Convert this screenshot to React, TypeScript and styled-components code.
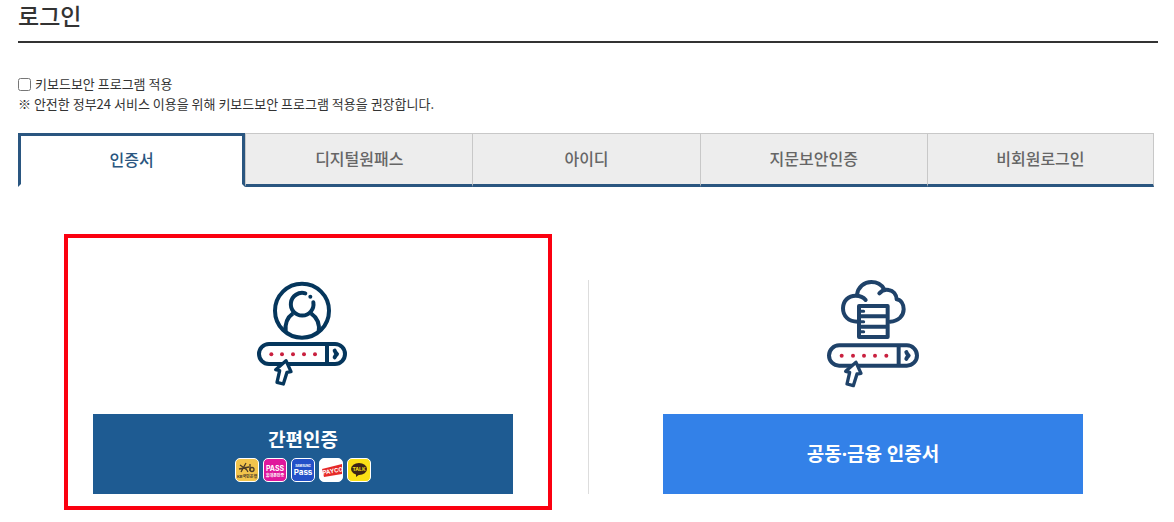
import React, { useState } from "react";
import styled, { createGlobalStyle, css } from "styled-components";

const NAVY = "#2a5680";

const GlobalStyle = createGlobalStyle`
  *, *::before, *::after { box-sizing: border-box; }
  body {
    margin: 0;
    background: #fff;
    color: #333;
    font-family: "Noto Sans CJK KR", "Noto Sans", sans-serif;
    font-size: 13px;
    line-height: 20px;
  }
  button { font-family: inherit; cursor: pointer; }
`;

const Page = styled.main`
  padding: 0 16px 28px 18px;
`;

const Title = styled.h1`
  margin: 0;
  padding-bottom: 10px;
  border-bottom: 2px solid #333;
  font-size: 23px;
  line-height: 31px;
  font-weight: 500;
`;

const Security = styled.div`
  padding: 31px 0 19px;
`;

const CheckLabel = styled.label`
  display: flex;
  align-items: center;
  gap: 4px;
`;

const Checkbox = styled.input`
  width: 13px;
  height: 13px;
  margin: 0;
`;

const Note = styled.p`
  margin: 0;
`;

const TabList = styled.div`
  display: grid;
  grid-template-columns: repeat(5, 1fr);
  padding-right: 4px;
`;

const Tab = styled.button<{ $active: boolean }>`
  height: 54px;
  padding: 0 0 2px;
  font-size: 16px;
  line-height: 24px;
  font-weight: 500;
  border: 0 solid #c8c8c8;
  border-bottom: 3px solid ${NAVY};
  border-top-width: 1px;
  border-left-width: 1px;
  background: #ededed;
  color: #666;

  &:last-child { border-right-width: 1px; }

  ${({ $active }) =>
    $active &&
    css`
      border: 3px solid ${NAVY};
      border-bottom-color: #fff;
      background: #fff;
      color: ${NAVY};
    `}
`;

const Methods = styled.section`
  display: grid;
  grid-template-columns: repeat(2, 1fr);
  padding-top: 93px;
`;

const Method = styled.div`
  display: flex;
  justify-content: center;

  & + & {
    box-shadow: inset 1px 0 0 #ddd;
  }
`;

const MethodBody = styled.div<{ $highlighted?: boolean }>`
  position: relative;
  display: flex;
  flex-direction: column;
  align-items: center;
  gap: 20px;
  width: 100%;
  max-width: 420px;

  ${({ $highlighted }) =>
    $highlighted &&
    css`
      &::after {
        content: "";
        position: absolute;
        inset: -46px -39px -16px -29px;
        border: 4px solid #fb0010;
        pointer-events: none;
      }
    `}
`;

const MethodButton = styled.button<{ $color: string }>`
  display: flex;
  flex-direction: column;
  align-items: center;
  justify-content: center;
  gap: 4px;
  width: 100%;
  height: 80px;
  padding: 0;
  border: 0;
  background: ${({ $color }) => $color};
  color: #fff;
  font-family: "Noto Sans", "Noto Sans CJK KR", sans-serif;
  font-size: 19px;
  line-height: 28px;
  font-weight: 700;
`;

const Providers = styled.span`
  display: flex;
  gap: 4px;
`;

const ProviderIcon = styled.svg<{ $color: string }>`
  display: block;
  width: 24px;
  height: 24px;
  border: 1px solid #fff;
  border-radius: 5px;
  background: ${({ $color }) => $color};
  font-family: "Inter", "Noto Sans CJK KR", sans-serif;
  font-weight: 700;
  text-anchor: middle;
`;

const Drawing = styled.svg`
  display: block;
  width: 120px;
  height: 114px;
  fill: none;
  stroke-linecap: round;
  stroke-linejoin: round;
`;

function PasswordBar({ end, divider, y, height, dots }: {
  end: number; divider: number; y: number; height: number; dots: number[];
}) {
  const mid = y + height / 2;
  const top = y + height - 10;
  return (
    <>
      <rect x="57" y={y} width={end - 57} height={height} rx={height / 2} />
      <path d={`M${divider} ${y}V${y + height}`} strokeLinecap="butt" />
      <path d={`M${divider + 23} ${mid - 10}q2 6 7 10q-5 5 -7 10`} />
      {dots.map((x) => (
        <circle key={x} cx={x} cy={mid + 1} r="6" fill="#c9203f" stroke="none" />
      ))}
      <path
        d={`M138 ${top}L107 ${top + 27}L119 ${top + 30}L111 ${top + 65}L130 ${top + 70}L141 ${top + 35}L153 ${top + 33}Z`}
        fill="#fff"
        strokeWidth="10"
      />
    </>
  );
}

function PersonDrawing() {
  return (
    <Drawing viewBox="9 30 360 342" stroke="#05365c" strokeWidth="12" aria-hidden="true">
      <circle cx="186" cy="122" r="81" />
      <path d="M196 70A34 34 0 1 0 220 97" />
      <circle cx="211" cy="80" r="6" fill="#05365c" stroke="none" />
      <path d="M159 130C143 141 134 160 137 186M213 130C229 141 240 160 236 186" strokeLinecap="butt" />
      <PasswordBar end={315} divider={261} y={222} height={60} dots={[94, 126, 159, 192, 225]} />
    </Drawing>
  );
}

function CloudDrawing() {
  return (
    <Drawing viewBox="9 30 360 342" stroke="#1f4269" strokeWidth="12" aria-hidden="true">
      <path d="M143 155C115 155 99 138 99 115C99 93 115 77 137 77C150 77 160 81 167 90" />
      <path d="M141 74C144 52 162 36 184 36C200 36 214 43 222 57" />
      <path d="M208 70C216 61 226 58 236 60C250 62 259 73 260 88C273 90 281 103 281 118C281 138 265 154 240 155" />
      <path d="M147 108H233V201H147ZM147 139H233M147 170H233" fill="#fff" />
      <path d="M150 124H161M150 155H161M150 185H161" strokeWidth="9" />
      <PasswordBar end={321} divider={266} y={226} height={61} dots={[95, 129, 162, 195, 229]} />
    </Drawing>
  );
}

function ProviderIcons() {
  return (
    <Providers>
      <ProviderIcon $color="#f2c44c" viewBox="0 0 22 22" fill="#4a3b28" role="img" aria-label="KB">
        <path
          d="M4 6L11 11M10 4L5 13M3 10L13 8M9 8L12 13M14 5V12"
          fill="none"
          stroke="#4a3b28"
          strokeWidth="1.3"
        />
        <circle cx="16" cy="10.5" r="2" fill="none" stroke="#4a3b28" strokeWidth="1.3" />
        <text x="11" y="19" fontSize="4">KB국민은행</text>
      </ProviderIcon>
      <ProviderIcon $color="#e0189c" viewBox="0 0 22 22" fill="#fff" role="img" aria-label="PASS">
        <text x="11" y="12" fontSize="7">PASS</text>
        <text x="11" y="18" fontSize="4">휴대폰인증</text>
      </ProviderIcon>
      <ProviderIcon $color="#2450c8" viewBox="0 0 22 22" fill="#fff" role="img" aria-label="Samsung Pass">
        <text x="11" y="8" fontSize="3">SAMSUNG</text>
        <text x="11" y="16" fontSize="8">Pass</text>
      </ProviderIcon>
      <ProviderIcon $color="#fff" viewBox="0 0 22 22" fill="#fff" role="img" aria-label="PAYCO">
        <path d="M2 10L22 5V15L4 18Z" fill="#e62a28" />
        <text x="13" y="14" fontSize="6" transform="rotate(-10 13 13)">PAYCO</text>
      </ProviderIcon>
      <ProviderIcon $color="#fae016" viewBox="0 0 22 22" fill="#fae016" role="img" aria-label="KakaoTalk">
        <ellipse cx="11" cy="10" rx="8" ry="6" fill="#3b2418" />
        <path d="M8 14v4l4-3Z" fill="#3b2418" />
        <text x="11" y="12" fontSize="5">TALK</text>
      </ProviderIcon>
    </Providers>
  );
}

const TABS = ["인증서", "디지털원패스", "아이디", "지문보안인증", "비회원로그인"];

export default function App() {
  const [active, setActive] = useState(0);
  return (
    <>
      <GlobalStyle />
      <Page>
        <Title>로그인</Title>
        <Security>
          <CheckLabel htmlFor="keyboard-security">
            <Checkbox type="checkbox" id="keyboard-security" />
            키보드보안 프로그램 적용
          </CheckLabel>
          <Note>※ 안전한 정부24 서비스 이용을 위해 키보드보안 프로그램 적용을 권장합니다.</Note>
        </Security>
        <TabList role="tablist">
          {TABS.map((label, i) => (
            <Tab
              key={label}
              type="button"
              role="tab"
              aria-selected={i === active}
              $active={i === active}
              onClick={() => setActive(i)}
            >
              {label}
            </Tab>
          ))}
        </TabList>
        <Methods>
          <Method>
            <MethodBody $highlighted>
              <PersonDrawing />
              <MethodButton type="button" $color="#1e5b92">
                간편인증
                <ProviderIcons />
              </MethodButton>
            </MethodBody>
          </Method>
          <Method>
            <MethodBody>
              <CloudDrawing />
              <MethodButton type="button" $color="#3381e8">공동·금융 인증서</MethodButton>
            </MethodBody>
          </Method>
        </Methods>
      </Page>
    </>
  );
}
